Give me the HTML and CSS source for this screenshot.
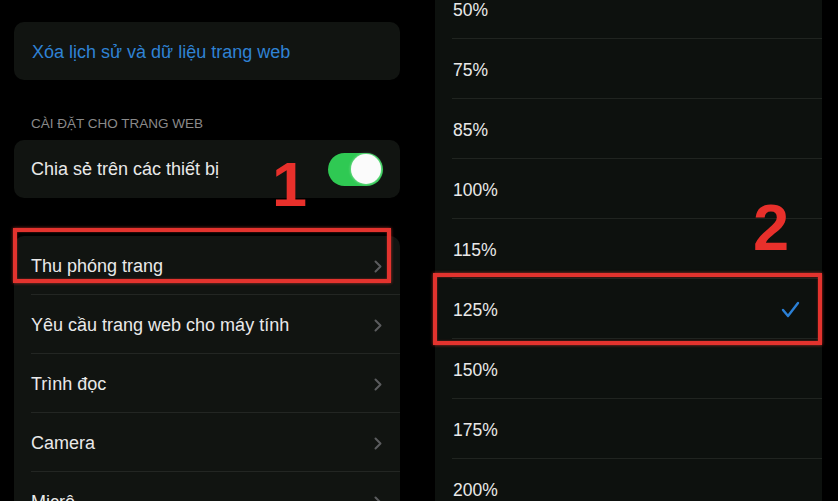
FILE: index.html
```html
<!DOCTYPE html>
<html lang="vi">
<head>
<meta charset="utf-8">
<title>Cài đặt Safari</title>
<link rel="stylesheet" href="styles.css">
</head>
<body>
<div class="page">
  <section class="left">
    <div class="card card-single">
      <span class="link">Xóa lịch sử và dữ liệu trang web</span>
    </div>
    <div class="section-title">CÀI ĐẶT CHO TRANG WEB</div>
    <div class="card card-single card-toggle">
      <span class="label">Chia sẻ trên các thiết bị</span>
      <span class="toggle"><span class="knob"></span></span>
    </div>
    <div class="card card-list">
      <div class="row"><span class="label">Thu phóng trang</span><svg class="chev" width="8" height="13" viewBox="0 0 8 13"><polyline points="1.5,1.5 6.5,6.5 1.5,11.5" /></svg></div>
      <div class="row"><span class="label">Yêu cầu trang web cho máy tính</span><svg class="chev" width="8" height="13" viewBox="0 0 8 13"><polyline points="1.5,1.5 6.5,6.5 1.5,11.5" /></svg></div>
      <div class="row"><span class="label">Trình đọc</span><svg class="chev" width="8" height="13" viewBox="0 0 8 13"><polyline points="1.5,1.5 6.5,6.5 1.5,11.5" /></svg></div>
      <div class="row"><span class="label">Camera</span><svg class="chev" width="8" height="13" viewBox="0 0 8 13"><polyline points="1.5,1.5 6.5,6.5 1.5,11.5" /></svg></div>
      <div class="row"><span class="label">Micrô</span><svg class="chev" width="8" height="13" viewBox="0 0 8 13"><polyline points="1.5,1.5 6.5,6.5 1.5,11.5" /></svg></div>
    </div>
  </section>
  <section class="right">
    <div class="zoom-list">
      <div class="zrow"><span class="label">50%</span></div>
      <div class="zrow"><span class="label">75%</span></div>
      <div class="zrow"><span class="label">85%</span></div>
      <div class="zrow"><span class="label">100%</span></div>
      <div class="zrow"><span class="label">115%</span></div>
      <div class="zrow"><span class="label">125%</span><svg class="check" width="19" height="17" viewBox="0 0 19 17"><polyline points="2,9 7,15 17,2" /></svg></div>
      <div class="zrow"><span class="label">150%</span></div>
      <div class="zrow"><span class="label">175%</span></div>
      <div class="zrow"><span class="label">200%</span></div>
    </div>
  </section>
  <div class="mark mark-1"></div>
  <div class="step step-1">1</div>
  <div class="mark mark-2"></div>
  <div class="step step-2">2</div>
</div>
</body>
</html>
```

FILE: styles.css
```css
html, body {
  margin: 0;
  padding: 0;
  background: #000;
}

.page {
  position: relative;
  display: flex;
  width: 838px;
  height: 501px;
  overflow: hidden;
  background: #000;
  font-family: "Liberation Sans", Arial, sans-serif;
  font-size: 18px;
  color: #e9e9e9;
}

.left {
  width: 386px;
  padding: 22px 0 0 14px;
  margin-right: 35px;
  flex: none;
}

.card {
  background: #111411;
  border-radius: 10px;
}

.card-single {
  height: 58px;
  display: flex;
  align-items: center;
  padding: 2px 17px 0 18px;
  box-sizing: border-box;
}

.link {
  color: #2f82d4;
}

.section-title {
  margin: 36px 0 8px 17px;
  height: 16px;
  line-height: 16px;
  font-size: 13.5px;
  color: #8a8a8a;
}

.card-toggle {
  justify-content: space-between;
  padding-left: 17px;
  padding-top: 0;
}

.toggle {
  width: 55px;
  height: 33px;
  border-radius: 17px;
  background: #2fc953;
  display: flex;
  align-items: center;
  justify-content: flex-end;
  padding-right: 2px;
  box-sizing: border-box;
}

.knob {
  width: 30px;
  height: 30px;
  border-radius: 50%;
  background: #fbfbfb;
  box-shadow: 0 0 3px rgba(255, 255, 255, 0.6);
}

.card-list {
  margin-top: 38px;
  height: 300px;
  border-radius: 10px 10px 0 0;
}

.row {
  height: 59px;
  margin-left: 17px;
  padding: 3px 18px 0 0;
  display: flex;
  align-items: center;
  justify-content: space-between;
  border-bottom: 1px solid #232623;
  box-sizing: border-box;
}

.chev polyline {
  fill: none;
  stroke: #5b5c5e;
  stroke-width: 2;
  stroke-linecap: round;
  stroke-linejoin: round;
}

.right {
  width: 387px;
  flex: none;
  background: #0d110e;
  overflow: hidden;
}

.zoom-list {
  margin-top: -21px;
}

.zrow {
  height: 60px;
  margin-left: 17px;
  padding: 4px 22px 0 1px;
  display: flex;
  align-items: center;
  justify-content: space-between;
  border-bottom: 1px solid #202420;
  box-sizing: border-box;
  font-size: 17.5px;
}

.check {
  margin-top: -2px;
}

.check polyline {
  fill: none;
  stroke: #2b80d6;
  stroke-width: 2.4;
  stroke-linecap: round;
  stroke-linejoin: round;
}

.mark {
  position: absolute;
  border: 4px solid #e3332e;
  box-shadow: 0 0 3px rgba(240, 60, 50, 0.7), inset 0 0 2px rgba(240, 60, 50, 0.6);
  box-sizing: border-box;
}

.mark-1 {
  left: 13px;
  top: 228px;
  width: 378px;
  height: 55px;
}

.mark-2 {
  left: 433px;
  top: 273px;
  width: 389px;
  height: 72px;
}

.step {
  position: absolute;
  font-family: "Liberation Sans", Arial, sans-serif;
  font-weight: bold;
  color: #e8302b;
  line-height: 1;
}

.step-1 {
  left: 272px;
  top: 153px;
  font-size: 63px;
}

.step-2 {
  left: 753px;
  top: 195px;
  font-size: 65px;
}
```
